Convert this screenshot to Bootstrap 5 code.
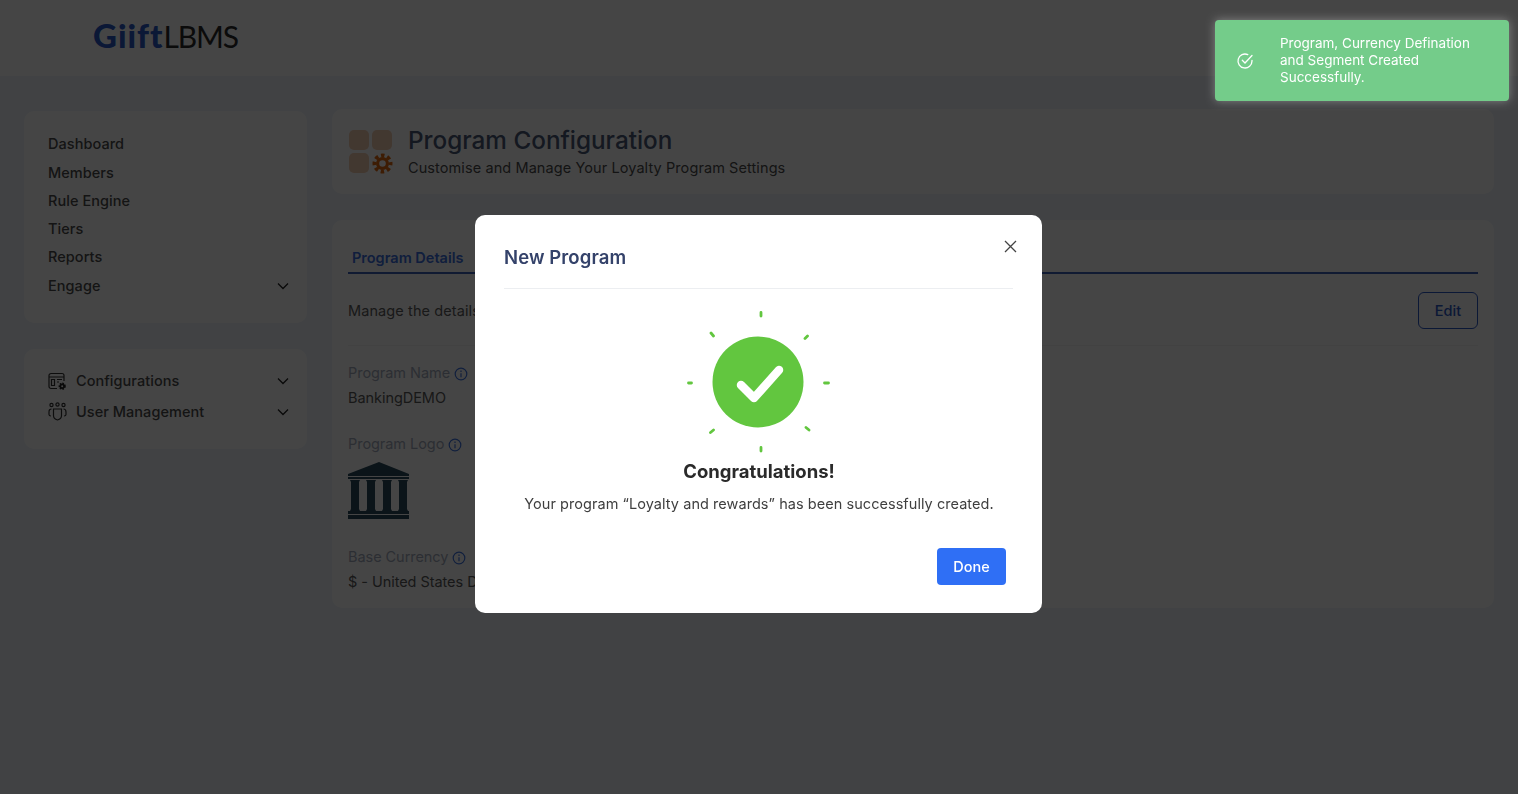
<!DOCTYPE html>
<html lang="en">

<head>
  <meta charset="UTF-8" />
  <meta name="viewport" content="width=device-width, initial-scale=1" />
  <title>GiiftLBMS - Program Configuration</title>
  <link href="https://cdn.jsdelivr.net/npm/bootstrap@5.3.0/dist/css/bootstrap.min.css" rel="stylesheet" />
  <style>
    body {
      font-family: Inter, "Noto Sans", sans-serif;
      background: #eef4fb;
      min-height: 794px;
      overflow: hidden;
      color: #4a4a4a;
    }

    .top-head {
      height: 76px;
      background: #fff;
      padding-left: 93px;
    }

    .brand-logo {
      font-family: Lato, sans-serif;
      font-size: 30px;
      line-height: 1;
      letter-spacing: -1.1px;
      color: #2a2a2a;
      margin-top: -6px;
    }

    .brand-logo b {
      color: #2a58c8;
      font-size: 33px;
      font-weight: 900;
      letter-spacing: 1px;
    }

    .page-body {
      padding: 33px 24px 0;
      gap: 25px;
    }

    .side-col {
      width: 283px;
      padding-top: 2px;
      gap: 26px;
    }

    .panel {
      background: #fff;
      border-radius: 10px;
    }

    .side-menu {
      padding: 19px 18px 22px 24px;
      height: 212px;
    }

    .side-menu2 {
      padding: 17px 18px 0 24px;
      height: 100px;
    }

    .side-link {
      height: 28.3px;
      font-size: 14.5px;
      font-weight: 500;
      letter-spacing: .05px;
      color: #4c4c4c;
    }

    .side-menu2 .side-link {
      height: 30.5px;
    }

    .side-link svg.ico {
      margin-right: 9px;
    }

    .main-col {
      width: 1162px;
      gap: 26px;
    }

    .title-panel {
      height: 85px;
      padding: 19px 17px;
    }

    .title-icon {
      margin-right: 15px;
    }

    .page-title {
      font-size: 24.3px;
      font-weight: 500;
      line-height: 30px;
      color: #4a5878;
      margin: -1px 0 0;
    }

    .page-sub {
      font-size: 14.5px;
      line-height: 20px;
      letter-spacing: .09px;
      color: #4c4c4c;
      margin-top: 3px;
    }

    .detail-panel {
      height: 388px;
      padding: 0 16px;
    }

    .tab-row {
      height: 54px;
      border-bottom: 2px solid #3b62b8;
    }

    .tab-row .nav-link {
      height: 54px;
      padding: 22px 4px 0;
      width: 127px;
      border: 0;
      text-align: left;
      font-size: 14.5px;
      font-weight: 600;
      line-height: 20px;
      color: #3d6fe0;
      background: none;
    }

    .manage-row {
      height: 72px;
      padding-top: 2px;
      border-bottom: 1px solid #f2f2f2;
      font-size: 14.5px;
      letter-spacing: .1px;
      color: #5c5c5c;
    }

    .edit-btn {
      width: 60px;
      height: 37px;
      padding: 0;
      font-size: 14.5px;
      font-weight: 500;
      border: 1.5px solid #2a58c8;
      border-radius: 6px;
      color: #2a58c8;
      background: none;
    }

    .field-label {
      font-size: 14.5px;
      line-height: 20px;
      letter-spacing: -.05px;
      color: #a3abbd;
    }

    .field-label svg {
      vertical-align: -3px;
    }

    .field-name {
      margin-top: 17px;
    }

    .field-logo {
      margin-top: 26px;
    }

    .field-currency {
      margin-top: 28px;
    }

    .field-value {
      font-size: 14.5px;
      line-height: 20px;
      letter-spacing: -.05px;
      margin-top: 5px;
      color: #5a5a5a;
    }

    .modal-backdrop {
      --bs-backdrop-opacity: .73;
    }

    .modal-dialog.done-dialog {
      max-width: 567px;
      margin: 215px 0 0 475px;
    }

    .done-box {
      height: 398px;
      border: 0;
      border-radius: 10px;
      padding: 0 28px 0 29px;
    }

    .done-head {
      height: 74px;
      margin-right: 1px;
      border-bottom: 1px solid #eceef1;
      padding-top: 29px;
    }

    .done-title {
      font-size: 18.5px;
      font-weight: 600;
      line-height: 26px;
      letter-spacing: .1px;
      color: #34426a;
      margin: 0;
    }

    .close-x {
      position: absolute;
      top: 24px;
      right: 24px;
      padding: 0;
      border: 0;
      background: none;
      line-height: 0;
    }

    .burst {
      display: block;
      margin: 16px auto 0;
    }

    .done-big {
      font-size: 18.5px;
      font-weight: 700;
      line-height: 24px;
      color: #2a2a2a;
      margin: 4px 0 0;
    }

    .done-text {
      font-size: 14.5px;
      line-height: 20px;
      letter-spacing: .05px;
      color: #3f3f3f;
      margin: 11px 0 0;
    }

    .done-btn {
      width: 69px;
      height: 37px;
      padding: 0;
      margin: 34px 8px 0 0;
      font-size: 14.5px;
      font-weight: 500;
      border: 0;
      border-radius: 4px;
      background: #2f6ff5;
      color: #fff;
    }

    .toast-wrap {
      position: fixed;
      top: 20px;
      right: 9px;
      z-index: 1090;
    }

    .toast.saved-toast {
      width: 294px;
      height: 81px;
      background: #74cc8a;
      color: #fff;
      border: 0;
      border-radius: 4px;
      box-shadow: 0 0 10px rgba(255, 255, 255, .35);
      font-size: 13.5px;
      line-height: 17px;
      letter-spacing: 0;
    }

    .toast-ico {
      width: 65px;
      padding-left: 21px;
      flex-shrink: 0;
    }

    .toast-msg {
      padding-right: 30px;
    }
  </style>
</head>

<body>
  <header class="top-head d-flex align-items-center">
    <div class="brand-logo"><b>Giift</b>LBMS</div>
  </header>

  <div class="page-body d-flex align-items-start">
    <aside class="side-col d-flex flex-column">
      <nav class="panel side-menu">
        <div class="side-link d-flex align-items-center">Dashboard</div>
        <div class="side-link d-flex align-items-center">Members</div>
        <div class="side-link d-flex align-items-center">Rule Engine</div>
        <div class="side-link d-flex align-items-center">Tiers</div>
        <div class="side-link d-flex align-items-center">Reports</div>
        <div class="side-link d-flex align-items-center justify-content-between">Engage
          <svg width="12" height="8" viewBox="0 0 12 8" fill="none" stroke="#222" stroke-width="1.3"><path d="M1 1.5l5 5 5-5" /></svg>
        </div>
      </nav>
      <nav class="panel side-menu2">
        <div class="side-link d-flex align-items-center">
          <svg class="ico" width="19" height="19" viewBox="0 0 19 19" fill="none" stroke="#333" stroke-width="1.2">
            <path d="M9 16.5H3a2 2 0 0 1-2-2v-11a2 2 0 0 1 2-2h11a2 2 0 0 1 2 2V9" />
            <path d="M1 5h15M3.500 7.500h3v6h-3zM9 7.500h5M9 10h2" />
            <circle cx="14.200" cy="14.200" r="2.700" fill="#222" stroke="#222" stroke-width="1.800" stroke-dasharray="1.500 1" />
            <circle cx="14.200" cy="14.200" r="1" fill="#fff" stroke="none" />
          </svg>
          <span class="flex-grow-1">Configurations</span>
          <svg width="12" height="8" viewBox="0 0 12 8" fill="none" stroke="#222" stroke-width="1.3"><path d="M1 1.500l5 5 5-5" /></svg>
        </div>
        <div class="side-link d-flex align-items-center">
          <svg class="ico" width="19" height="19" viewBox="0 0 19 19" fill="none" stroke="#333" stroke-width="1.200">
            <circle cx="3.500" cy="3" r="1.600" /><circle cx="9.500" cy="2.500" r="1.600" /><circle cx="15.500" cy="3" r="1.600" />
            <path d="M3.500 7C1.800 7 1 8 1 10v2.500c0 1 .8 1.500 2 1.500M15.500 7C17.200 7 18 8 18 10v2.500c0 1-.8 1.500-2 1.500" />
            <path d="M5.500 7h8v6.500c0 2.500-2 4-4 4.500-2-.5-4-2-4-4.500z" />
          </svg>
          <span class="flex-grow-1">User Management</span>
          <svg width="12" height="8" viewBox="0 0 12 8" fill="none" stroke="#222" stroke-width="1.300"><path d="M1 1.500l5 5 5-5" /></svg>
        </div>
      </nav>
    </aside>

    <main class="main-col d-flex flex-column">
      <section class="panel title-panel d-flex align-items-center">
        <svg class="title-icon" width="44" height="44" viewBox="0 0 44 44" fill="none">
          <rect x="0" y="0" width="20" height="20" rx="5" fill="#f5cdb0" />
          <rect x="23" y="0" width="20" height="20" rx="5" fill="#f5cdb0" />
          <rect x="0" y="23" width="20" height="20" rx="5" fill="#f5cdb0" />
          <circle cx="33.500" cy="33.500" r="4.900" stroke="#e06a10" stroke-width="3.200" />
          <circle cx="33.500" cy="33.500" r="8" stroke="#e06a10" stroke-width="4" stroke-dasharray="3.400 2.880" stroke-dashoffset="1.700" />
        </svg>
        <div>
          <h1 class="page-title">Program Configuration</h1>
          <div class="page-sub">Customise and Manage Your Loyalty Program Settings</div>
        </div>
      </section>

      <section class="panel detail-panel">
        <div class="tab-row nav">
          <button class="nav-link" type="button">Program Details</button>
        </div>
        <div class="manage-row d-flex align-items-center justify-content-between">
          <span>Manage the details of your program</span>
          <button class="edit-btn btn" type="button">Edit</button>
        </div>
        <div class="field-label field-name">Program Name <svg width="14" height="14" viewBox="0 0 14 14" fill="none" stroke="#3f74e0" stroke-width="1.200"><circle cx="7" cy="7" r="5.800" /><path d="M7 6.200v4M7 3.600v1.300" /></svg></div>
        <div class="field-value">BankingDEMO</div>
        <div class="field-label field-logo">Program Logo <svg width="14" height="14" viewBox="0 0 14 14" fill="none" stroke="#3f74e0" stroke-width="1.200"><circle cx="7" cy="7" r="5.800" /><path d="M7 6.200v4M7 3.600v1.300" /></svg></div>
        <svg class="d-block mt-2" width="62" height="57" viewBox="0 0 62 57" fill="#2a4a5c">
          <path d="M31 0L61 12v2H0v-2z" />
          <rect x="0" y="15" width="61" height="2" />
          <path d="M2 18h10l-1 2v27l1 2H2l1-2V20zM18 18h10l-1 2v27l1 2H18l1-2V20zM34 18h10l-1 2v27l1 2H34l1-2V20zM50 18h10l-1 2v27l1 2H50l1-2V20z" />
          <rect x="0" y="49" width="61" height="3" />
          <rect x="0" y="53" width="61" height="4" />
        </svg>
        <div class="field-label field-currency">Base Currency <svg width="14" height="14" viewBox="0 0 14 14" fill="none" stroke="#3f74e0" stroke-width="1.200"><circle cx="7" cy="7" r="5.800" /><path d="M7 6.200v4M7 3.600v1.300" /></svg></div>
        <div class="field-value">$ - United States Dollar</div>
      </section>
    </main>
  </div>

  <div class="modal-backdrop show"></div>

  <div class="modal d-block" tabindex="-1">
    <div class="modal-dialog done-dialog">
      <div class="modal-content done-box">
        <div class="done-head">
          <h5 class="done-title">New Program</h5>
        </div>
        <button class="close-x" type="button" aria-label="Close">
          <svg width="15" height="15" viewBox="0 0 15 15" stroke="#444" stroke-width="1.300"><path d="M2 2l11 11M13 2L2 13" /></svg>
        </button>
        <svg class="burst" width="160" height="150" viewBox="679 305 160 150" fill="none" stroke="#62c63f" stroke-linecap="round">
          <circle cx="758" cy="382" r="45.500" fill="#62c63f" stroke="none" />
          <path d="M761 312.500v3.500M688.500 383h3M824.500 383h4M761 447.500v3.500M711 333l2.500 3M805 338.500l2.500-2.500M710.500 432.500l3-2.500M806 427.500l3 2.500" stroke-width="2.800" />
          <path d="M741 385l13 13 25-28" stroke="#fff" stroke-width="8.500" stroke-linejoin="round" />
        </svg>
        <div class="text-center">
          <h4 class="done-big">Congratulations!</h4>
          <p class="done-text">Your program “Loyalty and rewards” has been successfully created.</p>
        </div>
        <div class="d-flex justify-content-end">
          <button class="done-btn btn" type="button">Done</button>
        </div>
      </div>
    </div>
  </div>

  <div class="toast-wrap">
    <div class="toast show saved-toast d-flex align-items-center" role="alert">
      <div class="toast-ico">
        <svg class="d-block" width="18" height="18" viewBox="0 0 18 18" fill="none" stroke="#fff" stroke-width="1.300" stroke-linecap="round">
          <path d="M16 8.300V9a7 7 0 1 1-4.200-6.400" />
          <path d="M6.300 8.300L9 11l7-7.500" />
        </svg>
      </div>
      <div class="toast-msg flex-grow-1">Program, Currency Defination and Segment Created Successfully.</div>
    </div>
  </div>

  <script src="https://cdn.jsdelivr.net/npm/bootstrap@5.3.0/dist/js/bootstrap.bundle.min.js"></script>
</body>

</html>
